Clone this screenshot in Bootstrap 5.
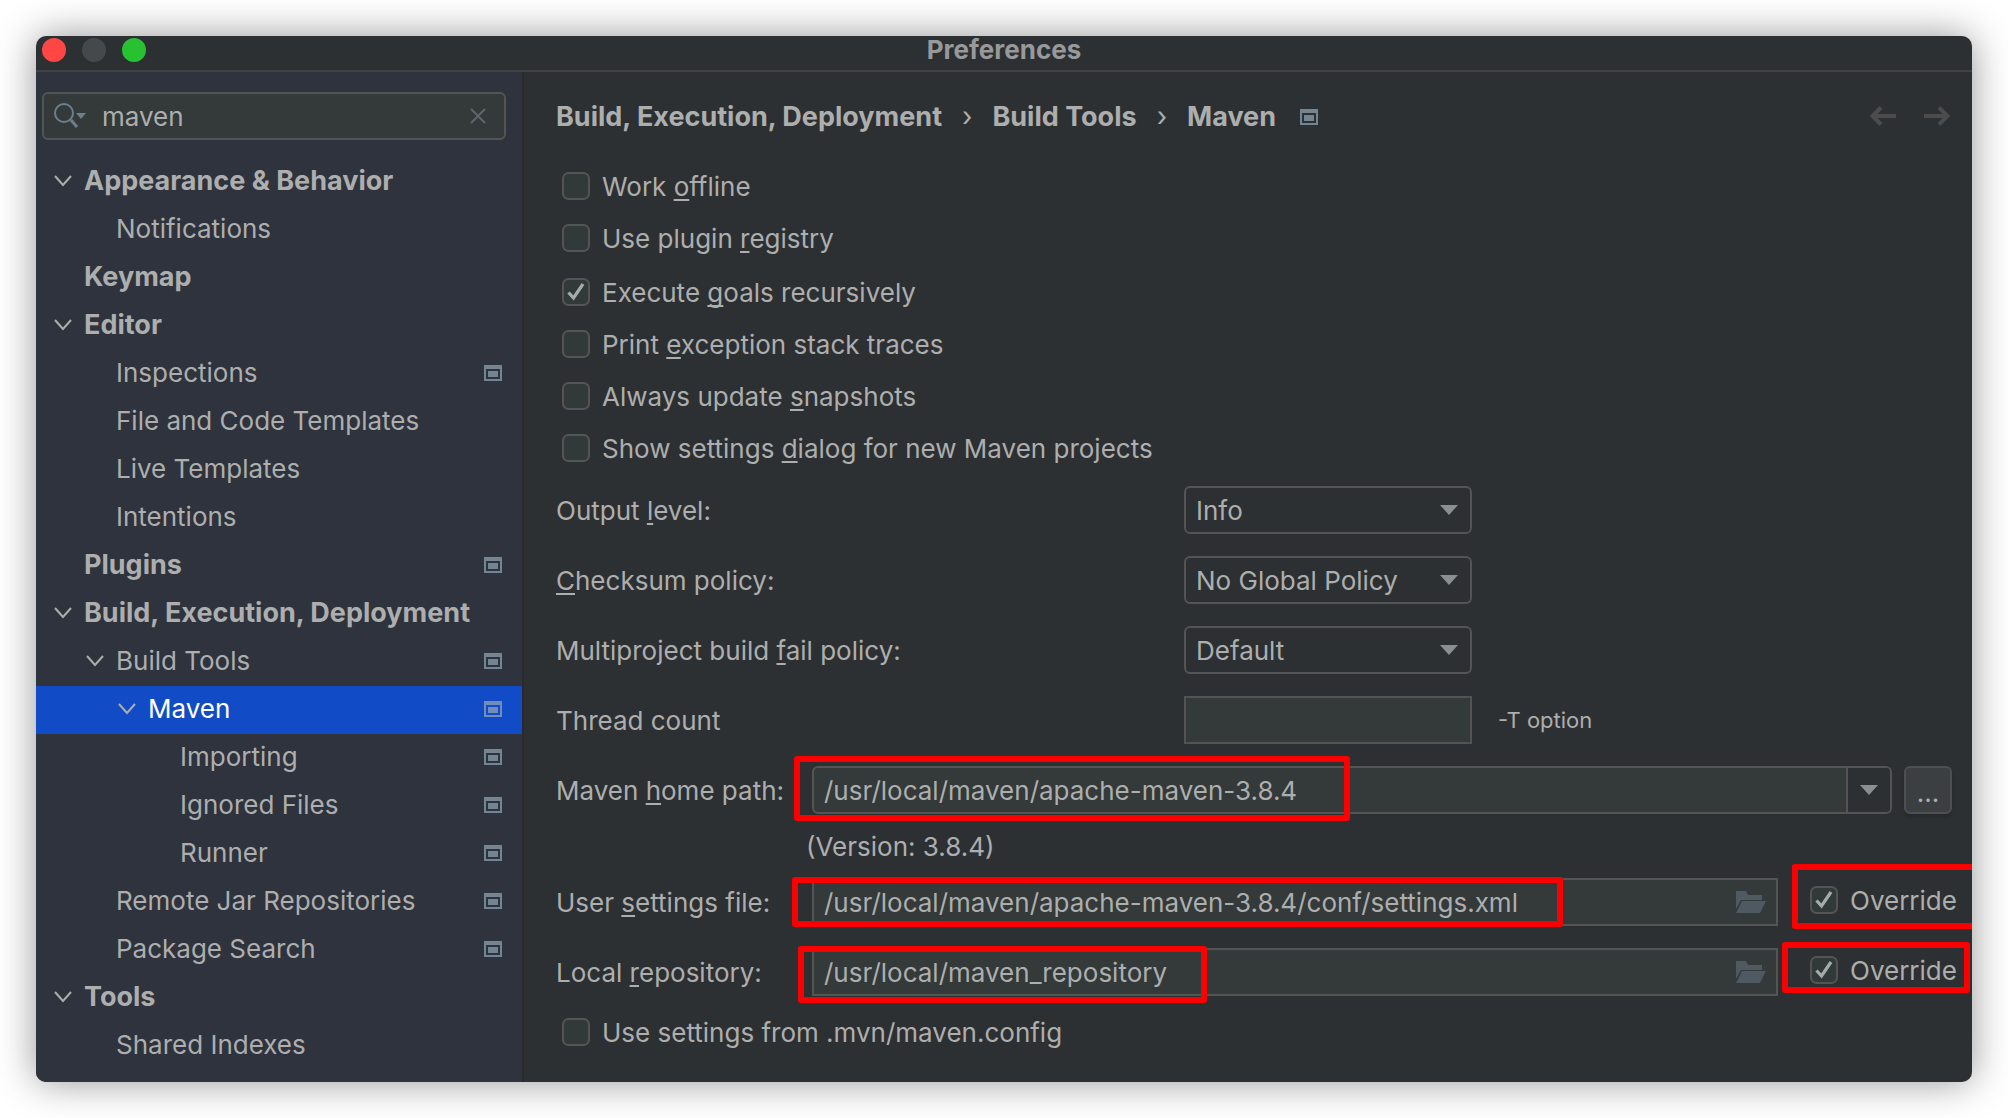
<!DOCTYPE html>
<html lang="en">
<head>
<meta charset="utf-8">
<meta name="viewport" content="width=device-width, initial-scale=1">
<title>Preferences</title>
<link href="https://cdn.jsdelivr.net/npm/bootstrap@5.3.0/dist/css/bootstrap.min.css" rel="stylesheet">
<style>
  :root { --ink: #adaeae; --pane: #2d3032; --side: #2f333d; --field: #343939; --line: #545454; --glyph: #728590; }
  body { background: #fff; font-family: Inter, "Noto Sans", sans-serif; font-size: 26px; line-height: 32px; color: var(--ink); }
  .prefs { min-height: calc(100vh - 72px); margin: 36px; border-radius: 10px; background: var(--pane); box-shadow: 0 0 38px rgba(0,0,0,.42); }
  .titlebar { height: 36px; border-bottom: 2px solid #434140; border-radius: 10px 10px 0 0; padding: 2px 6px 8px; color: #97999a; }
  .titlebar h1 { font-size: 26px; line-height: 24px; }
  .dots { gap: 16px; flex: 1 0 0; }
  .dot { width: 24px; height: 24px; border: 0; border-radius: 50%; padding: 0; background: #46494a; }
  .dot-close { background: #fe4644; }
  .dot-zoom { background: #28c131; }
  .sidebar { width: 488px; background: var(--side); border-right: 2px solid #292a2c; border-radius: 0 0 0 10px; padding: 20px 0 12px; }
  .search { height: 48px; margin: 0 16px 18px 6px; padding: 0 16px 0 10px; border: 2px solid var(--line); border-radius: 6px; background: var(--field); gap: 14px; }
  .search input, .path input { min-width: 0; background: transparent; border: 0; outline: 0; color: var(--ink); font-size: 26px; line-height: 32px; padding: 2px 0 0; }
  .bare { background: none; border: 0; padding: 0; display: flex; }
  .tree a { height: 48px; padding: 0 20px 2px 16px; color: var(--ink); }
  .tree .fw-bold, .crumbs { font-size: 27px; }
  .tree .lv1 { padding-left: 48px; }
  .tree .lv2 { padding-left: 80px; }
  .tree .lv3 { padding-left: 112px; }
  .tree a.active { background: #114cc6; color: #fff; }
  .tree .twist { width: 22px; height: 22px; margin-right: 10px; fill: none; stroke: var(--ink); stroke-width: 2; }
  svg { display: block; flex: none; }
  .content-pane { padding: 28px 20px 32px 32px; min-width: 0; }
  .crumbs { height: 32px; gap: 20px; padding-top: 2px; }
  .crumbs a { color: var(--ink); }
  .nav-arrows { gap: 28px; padding-right: 2px; }
  .checks { padding: 38px 0 22px 6px; gap: 22px; }
  .check-group { gap: 20px; }
  .tick { height: 32px; gap: 12px; }
  label { padding-top: 2px; }
  .tick input { width: 28px; height: 28px; margin: 0; flex: none; border: 2px solid var(--line); border-radius: 5px; background-color: #323939; }
  .tick input.form-check-input:checked { background-color: #323939; border-color: var(--line); background-size: 24px 24px;
    background-image: url("data:image/svg+xml,%3Csvg xmlns='http://www.w3.org/2000/svg' viewBox='0 0 24 24'%3E%3Cpath d='M4.500 12.500 9.500 18 19 4' fill='none' stroke='%23a7a9aa' stroke-width='3.200'/%3E%3C/svg%3E"); }
  u { text-decoration-thickness: 2px; text-underline-offset: 3px; text-decoration-skip-ink: none; }
  .fields { gap: 22px; }
  .label-wide { width: 628px; }
  .label-path { width: 256px; flex: none; }
  .pick { width: 288px; height: 48px; padding: 2px 40px 0 10px; border: 2px solid var(--line); border-radius: 6px; color: var(--ink); font-size: 26px; line-height: 32px; background-color: var(--pane); background-size: 18px 10px; background-position: right 12px center;
    background-image: url("data:image/svg+xml,%3Csvg xmlns='http://www.w3.org/2000/svg' viewBox='0 0 18 10'%3E%3Cpath d='M0 0h18L9 10z' fill='%238b8f92'/%3E%3C/svg%3E"); }
  .count { width: 288px; height: 48px; border: 2px solid var(--line); border-radius: 0; background: var(--field); color: var(--ink); }
  .hint { font-size: 22px; margin-left: 26px; }
  .path { height: 48px; min-width: 0; border: 2px solid var(--line); background: var(--field); padding: 0 10px; }
  .combo { border-radius: 6px; padding-right: 0; }
  .combo button { width: 44px; height: 44px; background: var(--pane); border-left: 2px solid var(--line); border-radius: 0 4px 4px 0; }
  .more { width: 48px; height: 48px; margin-left: 12px; border: 2px solid #4d4f50; border-radius: 6px; background: #3c3f42; color: var(--ink); padding: 6px 0 0; line-height: 32px; box-shadow: 0 3px 3px rgba(0,0,0,.15); }
  .version { padding: 17px 0 15px 250px; }
  .override { width: 142px; margin: 0 0 4px 32px; flex: none; }
  .callout { position: absolute; border: 6px solid #fb0000; border-radius: 3px; pointer-events: none; }
  .callout-home { left: 238px; top: -10px; width: 556px; height: 65px; }
  .callout-user { left: 236px; top: -1px; width: 771px; height: 50px; }
  .callout-repo { left: 242px; top: -2px; width: 409px; height: 57px; }
  .callout-over-user { right: -20px; top: -14px; width: 180px; height: 65px; border-right: 0; border-radius: 3px 0 0 3px; }
  .callout-over-repo { right: -18px; top: -6px; width: 188px; height: 51px; }
  .last-check { padding: 20px 0 0 6px; }
</style>
<script src="https://cdn.jsdelivr.net/npm/bootstrap@5.3.0/dist/js/bootstrap.bundle.min.js"></script>
</head>
<body>
<svg class="d-none" aria-hidden="true">
  <symbol id="win" viewBox="0 0 18 16"><path fill="currentColor" fill-rule="evenodd" d="M0 0h18v16H0zM2 4v10h14V4zM4 6h10v6H4z"/></symbol>
  <symbol id="chev" viewBox="0 0 22 22"><path d="M3 6l8 9 8-9"/></symbol>
  <symbol id="folder" viewBox="0 0 30 22"><path fill="#4e5961" d="M0 0h10l2 4h14v5H5L0 18zM6 10h24l-6 12H0z"/></symbol>
</svg>
<div class="prefs d-flex flex-column">
  <header class="titlebar d-flex align-items-center">
    <div class="dots d-flex">
      <button class="dot dot-close" aria-label="Close"></button>
      <button class="dot" aria-label="Minimize" disabled></button>
      <button class="dot dot-zoom" aria-label="Zoom"></button>
    </div>
    <h1 class="m-0 fw-bold">Preferences</h1>
    <div class="dots"></div>
  </header>
  <div class="d-flex flex-grow-1">
    <aside class="sidebar flex-shrink-0">
      <div class="search d-flex align-items-center">
        <svg width="34" height="28" viewBox="0 0 34 28" fill="none" stroke="#6b7f8c" stroke-width="2"><circle cx="10" cy="11" r="9"/><path d="M17 18l6 7" stroke-width="3"/><path d="M22 11h10l-5 6z" fill="#6b7f8c" stroke="none"/></svg>
        <input class="flex-grow-1" type="text" value="maven" aria-label="Search settings">
        <button class="bare" aria-label="Clear"><svg width="20" height="20" viewBox="0 0 20 20" stroke="#5e676c" stroke-width="2"><path d="M3 3l14 14M17 3L3 17"/></svg></button>
      </div>
      <nav class="tree nav flex-column flex-nowrap">
        <a href="#" class="d-flex align-items-center text-decoration-none fw-bold"><svg class="twist"><use href="#chev"/></svg>Appearance &amp; Behavior</a>
        <a href="#" class="lv1 d-flex align-items-center text-decoration-none"><span class="twist"></span>Notifications</a>
        <a href="#" class="d-flex align-items-center text-decoration-none fw-bold"><span class="twist"></span>Keymap</a>
        <a href="#" class="d-flex align-items-center text-decoration-none fw-bold"><svg class="twist"><use href="#chev"/></svg>Editor</a>
        <a href="#" class="lv1 d-flex align-items-center text-decoration-none"><span class="twist"></span><span class="flex-grow-1">Inspections</span><svg width="18" height="16" color="#728590"><use href="#win"/></svg></a>
        <a href="#" class="lv1 d-flex align-items-center text-decoration-none"><span class="twist"></span>File and Code Templates</a>
        <a href="#" class="lv1 d-flex align-items-center text-decoration-none"><span class="twist"></span>Live Templates</a>
        <a href="#" class="lv1 d-flex align-items-center text-decoration-none"><span class="twist"></span>Intentions</a>
        <a href="#" class="d-flex align-items-center text-decoration-none fw-bold"><span class="twist"></span><span class="flex-grow-1">Plugins</span><svg width="18" height="16" color="#728590"><use href="#win"/></svg></a>
        <a href="#" class="d-flex align-items-center text-decoration-none fw-bold"><svg class="twist"><use href="#chev"/></svg>Build, Execution, Deployment</a>
        <a href="#" class="lv1 d-flex align-items-center text-decoration-none"><svg class="twist"><use href="#chev"/></svg><span class="flex-grow-1">Build Tools</span><svg width="18" height="16" color="#728590"><use href="#win"/></svg></a>
        <a href="#" class="lv2 active d-flex align-items-center text-decoration-none" aria-current="page"><svg class="twist"><use href="#chev"/></svg><span class="flex-grow-1">Maven</span><svg width="18" height="16" color="#728db8"><use href="#win"/></svg></a>
        <a href="#" class="lv3 d-flex align-items-center text-decoration-none"><span class="twist"></span><span class="flex-grow-1">Importing</span><svg width="18" height="16" color="#728590"><use href="#win"/></svg></a>
        <a href="#" class="lv3 d-flex align-items-center text-decoration-none"><span class="twist"></span><span class="flex-grow-1">Ignored Files</span><svg width="18" height="16" color="#728590"><use href="#win"/></svg></a>
        <a href="#" class="lv3 d-flex align-items-center text-decoration-none"><span class="twist"></span><span class="flex-grow-1">Runner</span><svg width="18" height="16" color="#728590"><use href="#win"/></svg></a>
        <a href="#" class="lv1 d-flex align-items-center text-decoration-none"><span class="twist"></span><span class="flex-grow-1">Remote Jar Repositories</span><svg width="18" height="16" color="#728590"><use href="#win"/></svg></a>
        <a href="#" class="lv1 d-flex align-items-center text-decoration-none"><span class="twist"></span><span class="flex-grow-1">Package Search</span><svg width="18" height="16" color="#728590"><use href="#win"/></svg></a>
        <a href="#" class="d-flex align-items-center text-decoration-none fw-bold"><svg class="twist"><use href="#chev"/></svg>Tools</a>
        <a href="#" class="lv1 d-flex align-items-center text-decoration-none"><span class="twist"></span>Shared Indexes</a>
      </nav>
    </aside>
    <main class="content-pane flex-grow-1">
      <div class="d-flex align-items-center justify-content-between">
        <nav class="crumbs d-flex align-items-center fw-bold" aria-label="Breadcrumb">
          <a href="#" class="text-decoration-none">Build, Execution, Deployment</a><span class="fw-normal">›</span>
          <a href="#" class="text-decoration-none">Build Tools</a><span class="fw-normal">›</span>
          <a href="#" class="text-decoration-none">Maven</a>
          <svg class="ms-1" width="18" height="16" color="#728590"><use href="#win"/></svg>
        </nav>
        <div class="nav-arrows d-flex">
          <button class="bare" aria-label="Back"><svg width="26" height="20" viewBox="0 0 26 20" fill="none" stroke="#4c4c4c" stroke-width="4"><path d="M26 10H3M11 1.500L2.500 10l8.500 8.500"/></svg></button>
          <button class="bare" aria-label="Forward"><svg width="26" height="20" viewBox="0 0 26 20" fill="none" stroke="#4c4c4c" stroke-width="4"><path d="M0 10h23M15 1.500l8.500 8.500-8.500 8.500"/></svg></button>
        </div>
      </div>
      <div class="checks d-flex flex-column">
        <div class="check-group d-flex flex-column">
          <div class="tick d-flex align-items-center"><input class="form-check-input" type="checkbox" id="c1"><label for="c1">Work <u>o</u>ffline</label></div>
          <div class="tick d-flex align-items-center"><input class="form-check-input" type="checkbox" id="c2"><label for="c2">Use plugin <u>r</u>egistry</label></div>
        </div>
        <div class="check-group d-flex flex-column">
          <div class="tick d-flex align-items-center"><input class="form-check-input" type="checkbox" id="c3" checked><label for="c3">Execute <u>g</u>oals recursively</label></div>
          <div class="tick d-flex align-items-center"><input class="form-check-input" type="checkbox" id="c4"><label for="c4">Print <u>e</u>xception stack traces</label></div>
          <div class="tick d-flex align-items-center"><input class="form-check-input" type="checkbox" id="c5"><label for="c5">Always update <u>s</u>napshots</label></div>
          <div class="tick d-flex align-items-center"><input class="form-check-input" type="checkbox" id="c6"><label for="c6">Show settings <u>d</u>ialog for new Maven projects</label></div>
        </div>
      </div>
      <div class="fields d-flex flex-column">
        <div class="d-flex align-items-center"><label class="label-wide" for="level">Output <u>l</u>evel:</label><select class="form-select pick" id="level"><option>Info</option></select></div>
        <div class="d-flex align-items-center"><label class="label-wide" for="checksum"><u>C</u>hecksum policy:</label><select class="form-select pick" id="checksum"><option>No Global Policy</option></select></div>
        <div class="d-flex align-items-center"><label class="label-wide" for="fail">Multiproject build <u>f</u>ail policy:</label><select class="form-select pick" id="fail"><option>Default</option></select></div>
        <div class="d-flex align-items-center"><label class="label-wide" for="threads">Thread count</label><input class="count" type="text" id="threads"><span class="hint">-T option</span></div>
        <div class="d-flex align-items-center position-relative">
          <label class="label-path" for="home">Maven <u>h</u>ome path:</label>
          <div class="path combo d-flex align-items-center flex-grow-1"><input class="flex-grow-1" type="text" id="home" value="/usr/local/maven/apache-maven-3.8.4"><button class="bare align-items-center justify-content-center" aria-label="Show paths"><svg width="18" height="10" viewBox="0 0 18 10"><path d="M0 0h18L9 10z" fill="#8b8f92"/></svg></button></div>
          <button class="more">...</button>
          <div class="callout callout-home"></div>
        </div>
      </div>
      <div class="version">(Version: 3.8.4)</div>
      <div class="fields d-flex flex-column">
        <div class="d-flex align-items-center position-relative">
          <label class="label-path" for="userfile">User <u>s</u>ettings file:</label>
          <div class="path d-flex align-items-center flex-grow-1"><input class="flex-grow-1" type="text" id="userfile" value="/usr/local/maven/apache-maven-3.8.4/conf/settings.xml"><button class="bare" aria-label="Browse"><svg width="30" height="22"><use href="#folder"/></svg></button></div>
          <div class="override tick d-flex align-items-center"><input class="form-check-input" type="checkbox" id="o1" checked><label for="o1">Override</label></div>
          <div class="callout callout-user"></div>
          <div class="callout callout-over-user"></div>
        </div>
        <div class="d-flex align-items-center position-relative">
          <label class="label-path" for="repo">Local <u>r</u>epository:</label>
          <div class="path d-flex align-items-center flex-grow-1"><input class="flex-grow-1" type="text" id="repo" value="/usr/local/maven_repository"><button class="bare" aria-label="Browse"><svg width="30" height="22"><use href="#folder"/></svg></button></div>
          <div class="override tick d-flex align-items-center"><input class="form-check-input" type="checkbox" id="o2" checked><label for="o2">Override</label></div>
          <div class="callout callout-repo"></div>
          <div class="callout callout-over-repo"></div>
        </div>
      </div>
      <div class="last-check"><div class="tick d-flex align-items-center"><input class="form-check-input" type="checkbox" id="c7"><label for="c7">Use settings from .mvn/maven.config</label></div></div>
    </main>
  </div>
</div>
</body>
</html>
